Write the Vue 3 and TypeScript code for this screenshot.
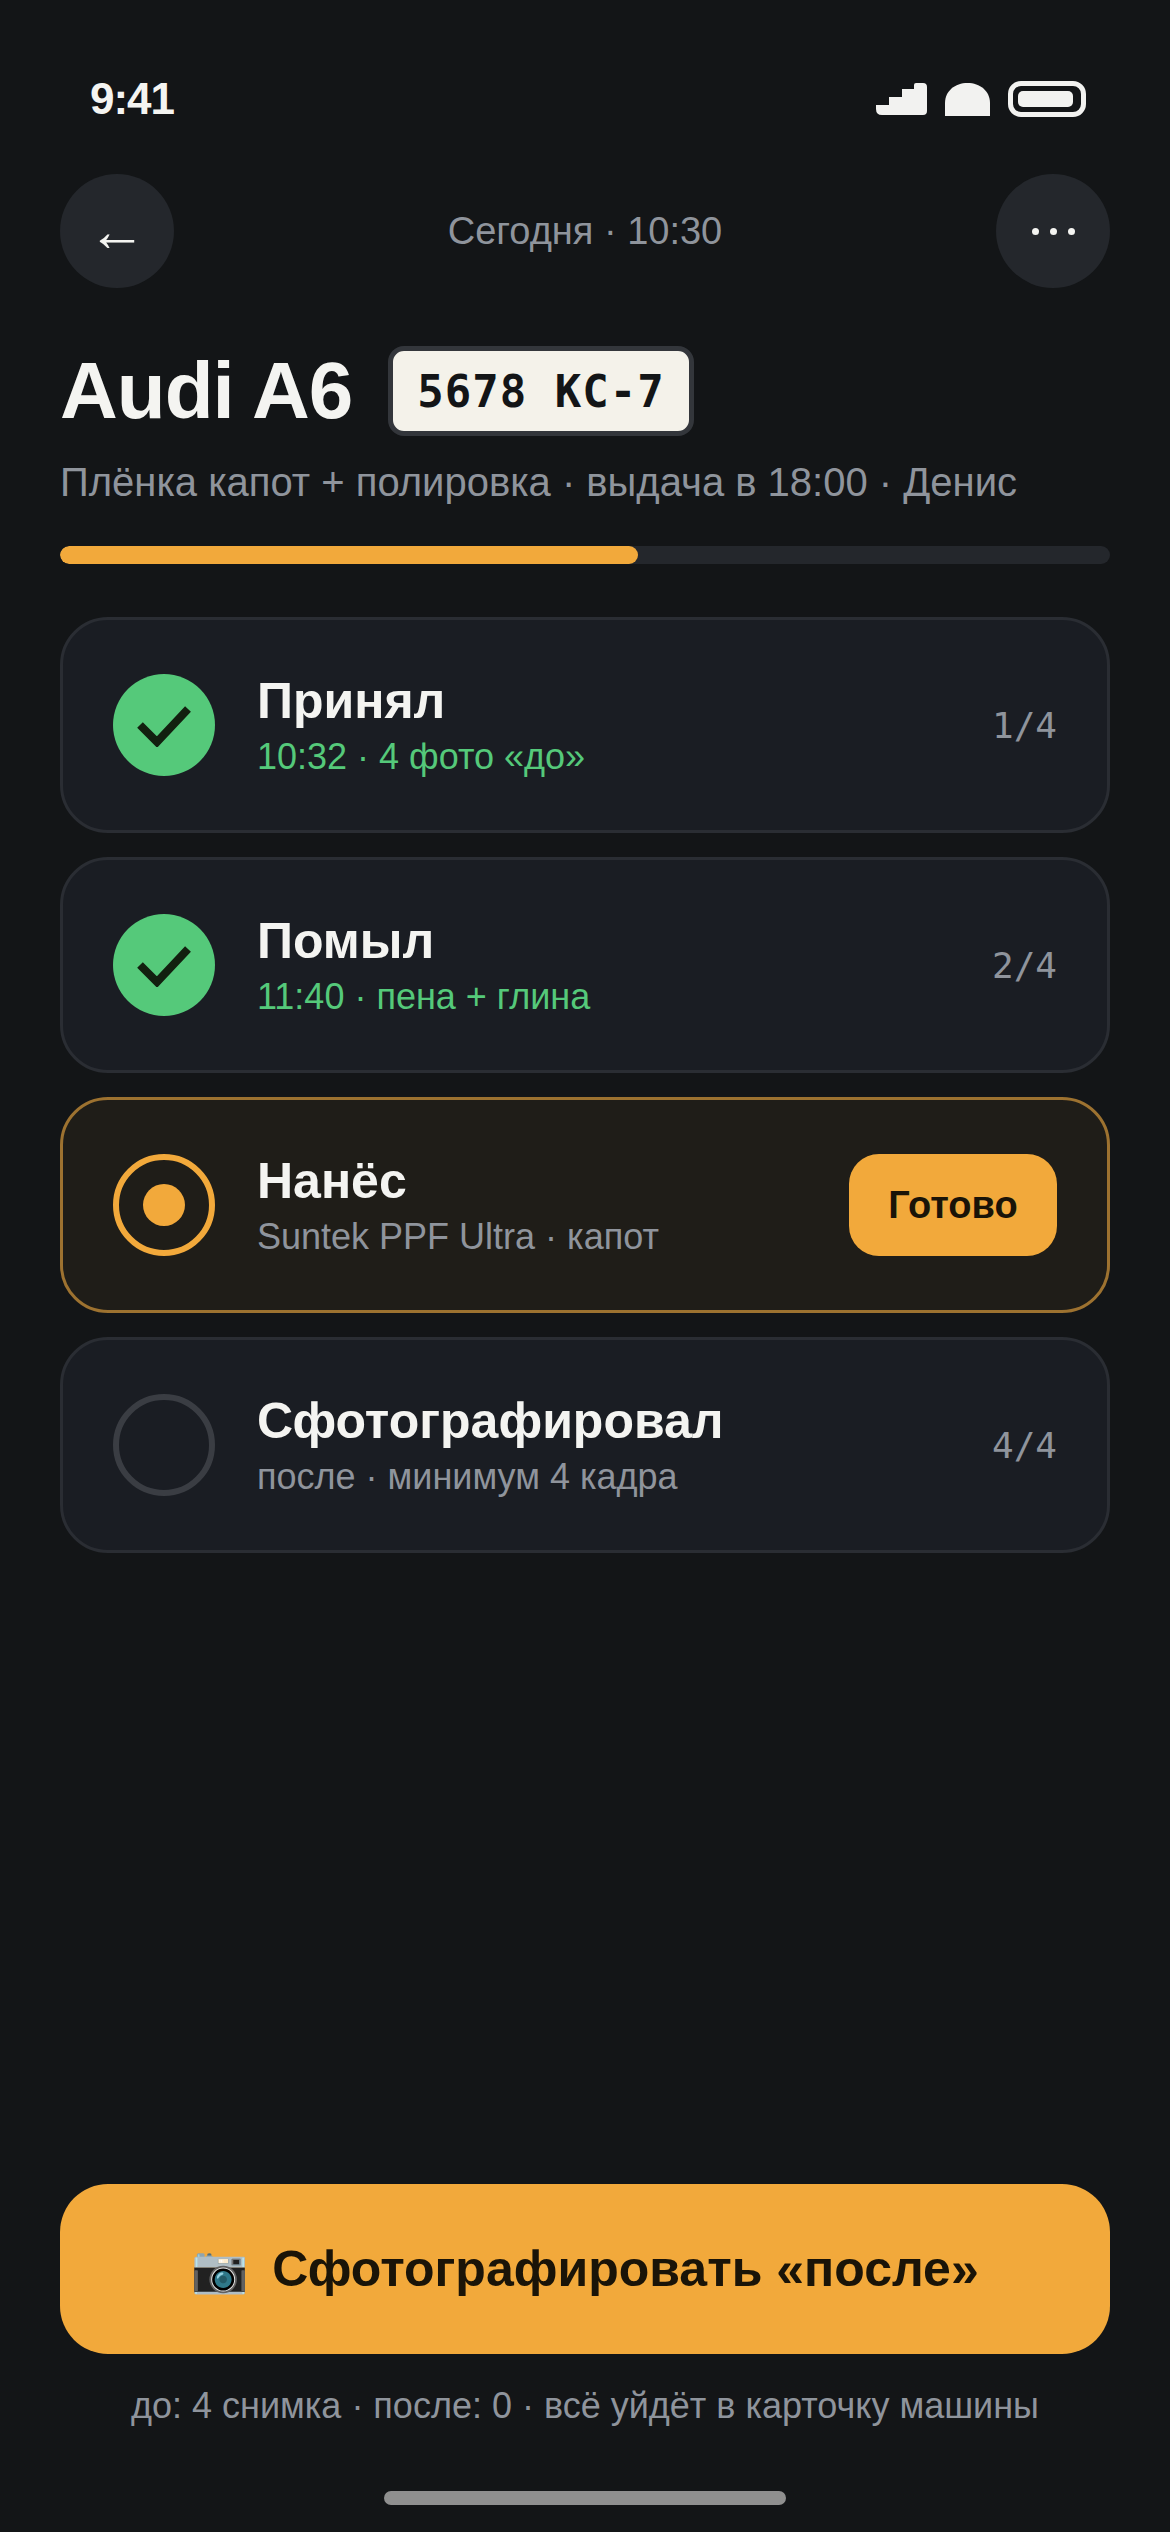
<script setup lang="ts">
interface Step {
  title: string
  sub: string
  count: string
  state: 'done' | 'active' | 'todo'
}
const steps: Step[] = [
  { title: 'Принял', sub: '10:32 · 4 фото «до»', count: '1/4', state: 'done' },
  { title: 'Помыл', sub: '11:40 · пена + глина', count: '2/4', state: 'done' },
  { title: 'Нанёс', sub: 'Suntek PPF Ultra · капот', count: '3/4', state: 'active' },
  { title: 'Сфотографировал', sub: 'после · минимум 4 кадра', count: '4/4', state: 'todo' },
]
</script>

<template>
  <div class="screen">
    <div class="status">
      <span class="time">9:41</span>
      <div class="status-icons">
        <svg width="51" height="32" viewBox="0 0 51 32">
          <path d="M0 22h13v-8h13V6h12V2q0-2 2-2h7q4 0 4 4v24q0 4-4 4H6q-6 0-6-6z" fill="#f2f2f0" />
        </svg>
        <svg width="45" height="33" viewBox="0 0 45 33">
          <path d="M0 33V20C0 8 10 0 22.500 0S45 8 45 20v13z" fill="#f2f2f0" />
        </svg>
        <span class="battery"><span class="battery-fill"></span></span>
      </div>
    </div>

    <div class="nav">
      <div class="round"><span class="arrow">←</span></div>
      <span class="nav-title">Сегодня · 10:30</span>
      <div class="round dots"><i></i><i></i><i></i></div>
    </div>

    <div class="title-row">
      <h1>Audi A6</h1>
      <span class="plate">5678 KC-7</span>
    </div>
    <p class="subtitle">Плёнка капот + полировка · выдача в 18:00 · Денис</p>

    <div class="progress"><div class="progress-fill" :style="{ width: '55%' }"></div></div>

    <div class="steps">
      <div v-for="s in steps" :key="s.title" class="card" :class="s.state">
        <div class="mark">
          <svg v-if="s.state === 'done'" width="56" height="44" viewBox="0 0 56 44">
            <path d="M4 22l17 17L52 6" fill="none" stroke="#12200f" stroke-width="8" />
          </svg>
          <span v-else-if="s.state === 'active'" class="mark-dot"></span>
        </div>
        <div class="body">
          <div class="step-title">{{ s.title }}</div>
          <div class="step-sub">{{ s.sub }}</div>
        </div>
        <button v-if="s.state === 'active'" class="ready">Готово</button>
        <span v-else class="count">{{ s.count }}</span>
      </div>
    </div>

    <div class="bottom">
      <button class="cta"><span class="cam">📷</span><span>Сфотографировать «после»</span></button>
      <p class="foot">до: 4 снимка · после: 0 · всё уйдёт в карточку машины</p>
      <div class="home"></div>
    </div>
  </div>
</template>

<style>
html, body { margin: 0; background: #131517; }
</style>

<style scoped>
.screen {
  width: 1170px;
  height: 2532px;
  box-sizing: border-box;
  padding: 0 60px;
  display: flex;
  flex-direction: column;
  background: #131517;
  color: #f4f4f1;
  font-family: "Liberation Sans", Arial, sans-serif;
  overflow: hidden;
}
.status {
  height: 36px;
  margin-top: 81px;
  display: flex;
  justify-content: space-between;
  align-items: center;
  padding: 0 24px 0 30px;
}
.time { font-size: 44px; font-weight: 700; letter-spacing: -1px; }
.status-icons { display: flex; align-items: center; gap: 18px; }
.battery {
  width: 78px;
  height: 36px;
  box-sizing: border-box;
  border: 5px solid #f2f2f0;
  border-radius: 13px;
  padding: 5px;
  display: block;
}
.battery-fill { display: block; width: 55px; height: 16px; background: #f2f2f0; border-radius: 5px; }
.nav {
  margin-top: 57px;
  display: flex;
  align-items: center;
  justify-content: space-between;
}
.round {
  width: 114px;
  height: 114px;
  border-radius: 50%;
  background: #24272c;
  display: flex;
  align-items: center;
  justify-content: center;
}
.arrow { font-size: 58px; line-height: 1; }
.dots { gap: 11px; }
.dots i { width: 7px; height: 7px; border-radius: 50%; background: #f4f4f1; display: block; }
.nav-title { font-size: 38px; color: #8f949c; }
.title-row {
  margin-top: 58px;
  display: flex;
  align-items: center;
  gap: 36px;
}
h1 { margin: 0; font-size: 80px; line-height: 90px; font-weight: 700; letter-spacing: -1px; }
.plate {
  box-sizing: border-box;
  height: 90px;
  padding: 0 24px;
  display: flex;
  align-items: center;
  background: #f4f2ea;
  color: #131517;
  border: 5px solid #33363b;
  border-radius: 16px;
  font-family: "DejaVu Sans Mono", monospace;
  font-size: 44px;
  font-weight: 700;
  letter-spacing: 1px;
}
.subtitle { margin: 20px 0 0; font-size: 40px; line-height: 52px; color: #8f949c; }
.progress { margin-top: 38px; height: 18px; border-radius: 9px; background: #24272c; overflow: hidden; }
.progress-fill { height: 100%; border-radius: 9px; background: #f2a93b; }
.steps { margin-top: 53px; display: flex; flex-direction: column; gap: 24px; }
.card {
  box-sizing: border-box;
  height: 216px;
  padding: 0 50px;
  display: flex;
  align-items: center;
  gap: 42px;
  background: #1a1d23;
  border: 3px solid #2a2d33;
  border-radius: 48px;
}
.card.active { background: #1f1d18; border-color: #9d7230; }
.mark {
  width: 102px;
  height: 102px;
  flex: none;
  box-sizing: border-box;
  border-radius: 50%;
  display: flex;
  align-items: center;
  justify-content: center;
}
.done .mark { background: #55c97a; }
.active .mark { border: 6px solid #f2a93b; }
.todo .mark { border: 6px solid #3a3d43; }
.mark-dot { width: 42px; height: 42px; border-radius: 50%; background: #f2a93b; }
.body { flex: 1; min-width: 0; }
.step-title { font-size: 50px; line-height: 60px; font-weight: 700; }
.step-sub { margin-top: 4px; font-size: 36px; line-height: 44px; color: #8f949c; }
.done .step-sub { color: #55c97a; }
.count { font-family: "DejaVu Sans Mono", monospace; font-size: 36px; color: #8f949c; }
.ready {
  width: 208px;
  height: 102px;
  border: 0;
  border-radius: 30px;
  background: #f2a93b;
  color: #1a1408;
  font-family: inherit;
  font-size: 38px;
  font-weight: 700;
}
.bottom { margin-top: auto; display: flex; flex-direction: column; align-items: center; }
.cta {
  width: 100%;
  height: 170px;
  border: 0;
  border-radius: 48px;
  background: #f2a93b;
  color: #1a1408;
  font-family: inherit;
  font-size: 50px;
  font-weight: 700;
  display: flex;
  align-items: center;
  justify-content: center;
  gap: 24px;
}
.cam { font-size: 46px; font-weight: 400; }
.foot { margin: 30px 0 0; font-size: 36px; line-height: 44px; color: #8f949c; }
.home { width: 402px; height: 14px; margin: 63px 0 27px; border-radius: 7px; background: #8f8f8f; }
</style>
